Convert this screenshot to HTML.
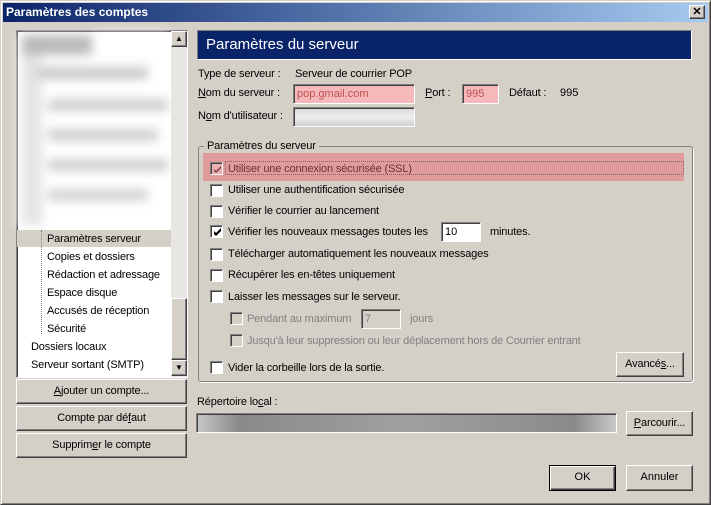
<!DOCTYPE html>
<html><head><meta charset="utf-8"><style>
*{box-sizing:border-box;margin:0;padding:0}
body{width:711px;height:505px;background:#d4d0c8;font:11px "Liberation Sans",sans-serif;color:#000;position:relative;overflow:hidden}
.a{position:absolute;white-space:nowrap}
.win{position:absolute;left:0;top:0;width:711px;height:505px;border:1px solid;border-color:#d4d0c8 #404040 #404040 #d4d0c8;box-shadow:inset 1px 1px #fff,inset -1px -1px #808080}
.title{left:3px;top:3px;width:705px;height:19px;background:linear-gradient(90deg,#0a246a,#a6caf0);color:#fff;font-weight:bold;font-size:12px;line-height:19px;padding-left:3px}
.btn{position:absolute;background:#d4d0c8;border:1px solid;border-color:#fff #404040 #404040 #fff;box-shadow:inset -1px -1px #808080;text-align:center}
.inp{position:absolute;border:1px solid;border-color:#808080 #fff #fff #808080;box-shadow:inset 1px 1px #404040;background:#fff;padding-left:3px}
.cb{position:absolute;width:13px;height:13px;background:#fff;border:1px solid;border-color:#808080 #fff #fff #808080;box-shadow:inset 1px 1px #404040}
.cb.d{background:#d4d0c8}
.cb svg{position:absolute;left:2px;top:2px}
u{text-decoration:underline}
.dis{color:#808080}
.t{letter-spacing:-0.15px}
</style></head><body>
<div class="win"></div>
<div class="a title">Paramètres des comptes</div>
<div class="btn" style="left:689px;top:5px;width:16px;height:14px;font-size:11px;line-height:12px;font-weight:bold">✕</div>

<div class="a" style="left:16px;top:30px;width:172px;height:348px;background:#fff;border:1px solid;border-color:#808080 #fff #fff #808080;box-shadow:inset 1px 1px #404040"></div>
<div class="a" style="left:18px;top:33px;width:152px;height:195px;background:#fff;filter:blur(5px)">
<div class="a" style="left:4px;top:2px;width:70px;height:20px;background:#bbb"></div>
<div class="a" style="left:4px;top:22px;width:20px;height:170px;background:#e4e4e4"></div>
<div class="a" style="left:20px;top:34px;width:110px;height:12px;background:#c8c8c8"></div>
<div class="a" style="left:30px;top:66px;width:120px;height:12px;background:#cfcfcf"></div>
<div class="a" style="left:30px;top:96px;width:110px;height:12px;background:#cfcfcf"></div>
<div class="a" style="left:30px;top:126px;width:120px;height:12px;background:#cfcfcf"></div>
<div class="a" style="left:30px;top:156px;width:100px;height:12px;background:#d4d4d4"></div>
</div>
<div class="a" style="left:17px;top:230px;width:154px;height:17px;background:#d4d0c8"></div>
<div class="a" style="left:41px;top:230px;height:104px;border-left:1px dotted #808080"></div>
<div class="a t" style="left:47px;top:233px">Paramètres serveur</div>
<div class="a t" style="left:47px;top:251px">Copies et dossiers</div>
<div class="a t" style="left:47px;top:269px">Rédaction et adressage</div>
<div class="a t" style="left:47px;top:287px">Espace disque</div>
<div class="a t" style="left:47px;top:305px">Accusés de réception</div>
<div class="a t" style="left:47px;top:323px">Sécurité</div>
<div class="a t" style="left:31px;top:341px">Dossiers locaux</div>
<div class="a t" style="left:31px;top:359px">Serveur sortant (SMTP)</div>
<div class="a" style="left:171px;top:31px;width:16px;height:346px;background:#e8e6e2"></div>
<div class="btn" style="left:171px;top:31px;width:16px;height:16px;font-size:8px;line-height:14px">▲</div>
<div class="btn" style="left:171px;top:298px;width:16px;height:62px"></div>
<div class="btn" style="left:171px;top:360px;width:16px;height:16px;font-size:8px;line-height:14px">▼</div>

<div class="btn t" style="left:16px;top:379px;width:171px;height:25px;line-height:22px"><u>A</u>jouter un compte...</div>
<div class="btn t" style="left:16px;top:406px;width:171px;height:25px;line-height:22px">Compte par dé<u>f</u>aut</div>
<div class="btn t" style="left:16px;top:433px;width:171px;height:25px;line-height:22px">Supprim<u>e</u>r le compte</div>

<div class="a" style="left:197px;top:30px;width:495px;height:30px;background:#0a246a;border:1px solid;border-color:#808080 #fff #fff #808080;color:#fff;font-size:15px;line-height:28px;padding-left:8px">Paramètres du serveur</div>
<div class="a t" style="left:198px;top:68px">Type de serveur :</div>
<div class="a t" style="left:295px;top:68px">Serveur de courrier POP</div>
<div class="a t" style="left:198px;top:87px"><u>N</u>om du serveur :</div>
<div class="inp" style="left:293px;top:84px;width:122px;height:20px;background:#f5b8bb;color:#c05050;line-height:18px">pop.gmail.com</div>
<div class="a t" style="left:425px;top:87px"><u>P</u>ort :</div>
<div class="inp" style="left:462px;top:84px;width:37px;height:20px;background:#f5b8bb;color:#c05050;line-height:18px">995</div>
<div class="a t" style="left:509px;top:87px">Défaut :</div>
<div class="a" style="left:560px;top:87px">995</div>
<div class="a t" style="left:198px;top:110px">N<u>o</u>m d'utilisateur :</div>
<div class="inp" style="left:293px;top:107px;width:122px;height:20px;background:linear-gradient(#d8d8d8,#eee 50%,#d0d0d0)"></div>

<div class="a" style="left:198px;top:146px;width:495px;height:236px;border:1px solid #808080;border-radius:3px;box-shadow:1px 1px #fff"></div>
<div class="a t" style="left:204px;top:140px;background:#d4d0c8;padding:0 3px">Paramètres du serveur</div>
<div class="a" style="left:203px;top:153px;width:481px;height:28px;background:#e09c9c"></div>
<div class="a" style="left:225px;top:161px;width:459px;height:14px;border:1px dotted #806060"></div>

<div class="cb" style="left:210px;top:162px;background:#eab0b0"><svg width="9" height="9"><path d="M1 4l2 2 5-5v2l-5 5-2-2z" fill="#804040"/></svg></div>
<div class="a t" style="left:228px;top:163px;color:#703030">Utiliser une connexion sécurisée (SSL)</div>
<div class="cb" style="left:210px;top:184px"></div><div class="a t" style="left:228px;top:184px">Utiliser une authentification sécurisée</div>
<div class="cb" style="left:210px;top:205px"></div><div class="a t" style="left:228px;top:205px">Vérifier le courrier au lancement</div>
<div class="cb" style="left:210px;top:225px"><svg width="9" height="9"><path d="M1 3l2 2 5-5v3l-5 5-2-2z" fill="#000"/></svg></div>
<div class="a t" style="left:228px;top:226px">Vérifier les nouveaux messages toutes les</div>
<div class="inp" style="left:441px;top:222px;width:40px;height:20px;line-height:18px">10</div>
<div class="a t" style="left:490px;top:226px">minutes.</div>
<div class="cb" style="left:210px;top:248px"></div><div class="a t" style="left:228px;top:248px">Télécharger automatiquement les nouveaux messages</div>
<div class="cb" style="left:210px;top:269px"></div><div class="a t" style="left:228px;top:269px">Récupérer les en-têtes uniquement</div>
<div class="cb" style="left:210px;top:290px"></div><div class="a t" style="left:228px;top:291px">Laisser les messages sur le serveur.</div>
<div class="cb d" style="left:230px;top:312px"></div><div class="a dis t" style="left:247px;top:313px">Pendant au maximum</div>
<div class="inp dis" style="left:361px;top:309px;width:40px;height:20px;background:#d4d0c8;line-height:18px">7</div>
<div class="a dis t" style="left:410px;top:313px">jours</div>
<div class="cb d" style="left:230px;top:334px"></div><div class="a dis t" style="left:247px;top:335px">Jusqu'à leur suppression ou leur déplacement hors de Courrier entrant</div>
<div class="cb" style="left:210px;top:361px"></div><div class="a t" style="left:228px;top:362px">Vider la corbeille lors de la sortie.</div>
<div class="btn t" style="left:616px;top:352px;width:68px;height:25px;line-height:22px">Avancé<u>s</u>...</div>

<div class="a t" style="left:197px;top:396px">Répertoire lo<u>c</u>al :</div>
<div class="inp" style="left:196px;top:413px;width:421px;height:20px;background:linear-gradient(90deg,#c8c8c8,#8a8a8a 10%,#a0a0a0 50%,#8a8a8a 90%,#c8c8c8)"></div>
<div class="btn t" style="left:626px;top:411px;width:67px;height:25px;line-height:22px"><u>P</u>arcourir...</div>
<div class="btn" style="left:549px;top:465px;width:67px;height:26px;line-height:23px;border-color:#000;box-shadow:inset 1px 1px #fff,inset -1px -1px #404040,inset -2px -2px #808080">OK</div>
<div class="btn" style="left:626px;top:465px;width:67px;height:26px;line-height:23px">Annuler</div>
</body></html>
